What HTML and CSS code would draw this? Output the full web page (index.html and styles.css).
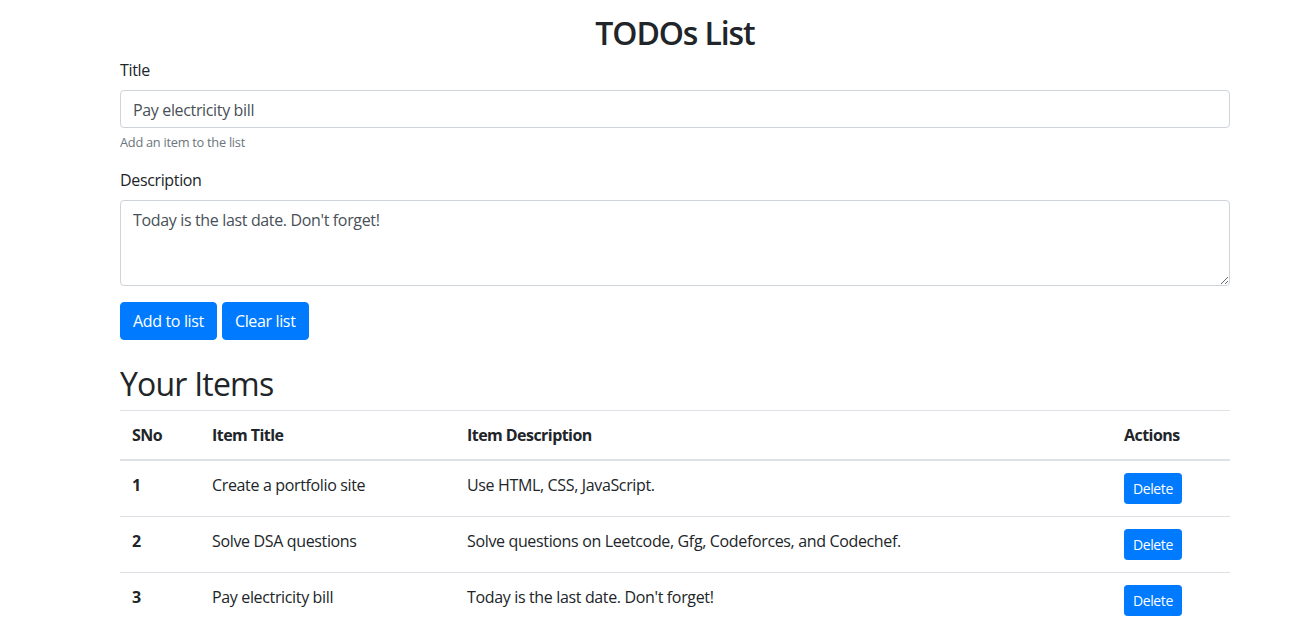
FILE: index.html
```html
<!DOCTYPE html>
<html lang="en">
<head>
<meta charset="utf-8">
<title>TODOs List</title>
<link rel="stylesheet" href="styles.css">
</head>
<body>
<div class="container">
  <h2 class="page-title">TODOs List</h2>
  <form class="todo-form">
    <div class="form-group">
      <label class="form-label" for="title">Title</label>
      <input class="form-control" id="title" type="text" value="Pay electricity bill">
      <small class="form-text">Add an item to the list</small>
    </div>
    <div class="form-group">
      <label class="form-label" for="description">Description</label>
      <textarea class="form-control form-textarea" id="description" rows="3">Today is the last date. Don't forget!</textarea>
    </div>
    <div class="btn-row">
      <button type="button" class="btn btn-primary">Add to list</button>
      <button type="button" class="btn btn-primary">Clear list</button>
    </div>
  </form>

  <h2 class="section-title">Your Items</h2>
  <table class="table">
    <colgroup>
      <col class="col-sno">
      <col class="col-title">
      <col class="col-desc">
      <col class="col-actions">
    </colgroup>
    <thead>
      <tr>
        <th>SNo</th>
        <th>Item Title</th>
        <th>Item Description</th>
        <th>Actions</th>
      </tr>
    </thead>
    <tbody>
      <tr>
        <th class="row-head">1</th>
        <td>Create a portfolio site</td>
        <td>Use HTML, CSS, JavaScript.</td>
        <td><button type="button" class="btn btn-primary btn-sm">Delete</button></td>
      </tr>
      <tr>
        <th class="row-head">2</th>
        <td>Solve DSA questions</td>
        <td>Solve questions on Leetcode, Gfg, Codeforces, and Codechef.</td>
        <td><button type="button" class="btn btn-primary btn-sm">Delete</button></td>
      </tr>
      <tr>
        <th class="row-head">3</th>
        <td>Pay electricity bill</td>
        <td>Today is the last date. Don't forget!</td>
        <td><button type="button" class="btn btn-primary btn-sm">Delete</button></td>
      </tr>
    </tbody>
  </table>
</div>
</body>
</html>
```

FILE: styles.css
```css
* {
  box-sizing: border-box;
}

body {
  margin: 0;
  font-family: "Segoe UI", "Open Sans", "Noto Sans", sans-serif;
  font-size: 16px;
  line-height: 1.5;
  letter-spacing: -0.35px;
  color: #212529;
  background: #fff;
}

.container {
  width: 1110px;
  margin: 0 auto 0 120px;
  padding-top: 14px;
}

.page-title,
.section-title {
  font-size: 32px;
  font-weight: 500;
  line-height: 1.2;
  margin: 0 0 6px;
}

.page-title {
  text-align: center;
  font-weight: 600;
  letter-spacing: -1.1px;
}

.section-title {
  margin-top: 25px;
  letter-spacing: -0.8px;
}

.todo-form {
  margin: 0;
}

.form-group {
  margin-bottom: 16px;
}

.form-label {
  display: inline-block;
  margin-bottom: 8px;
}

.form-control {
  display: block;
  width: 100%;
  height: 38px;
  padding: 7px 12px 5px;
  font-family: inherit;
  font-size: 16px;
  line-height: 1.5;
  letter-spacing: -0.35px;
  color: #495057;
  background: #fff;
  border: 1px solid #ced4da;
  border-radius: 4px;
  margin: 0;
}

.form-textarea {
  height: 86px;
  resize: vertical;
}

.form-text {
  display: block;
  margin-top: 4px;
  font-size: 12.8px;
  line-height: 20px;
  letter-spacing: -0.27px;
  color: #6c757d;
}

.btn-row {
  display: flex;
  gap: 5px;
}

.btn {
  display: inline-block;
  font-family: inherit;
  font-size: 16px;
  line-height: 1.5;
  font-weight: 400;
  letter-spacing: -0.35px;
  padding: 6px 12px;
  border: 1px solid transparent;
  border-radius: 4px;
  cursor: pointer;
  margin: 0;
}

.btn-primary {
  color: #fff;
  background: #007bff;
  border-color: #007bff;
}

.btn-sm {
  font-size: 14px;
  padding: 4px 8px;
  border-radius: 3.2px;
  letter-spacing: -0.4px;
}

.table {
  width: 100%;
  border-collapse: collapse;
  table-layout: fixed;
  margin-bottom: 16px;
  color: #212529;
}

.col-sno { width: 80px; }
.col-title { width: 255px; }
.col-desc { width: 657px; }
.col-actions { width: 118px; }

.table th,
.table td {
  padding: 12px;
  vertical-align: top;
  border-top: 1px solid #dee2e6;
  text-align: left;
}

.table th {
  font-weight: 700;
  letter-spacing: -0.55px;
}

.table thead th {
  vertical-align: bottom;
  border-bottom: 2px solid #dee2e6;
}
```
